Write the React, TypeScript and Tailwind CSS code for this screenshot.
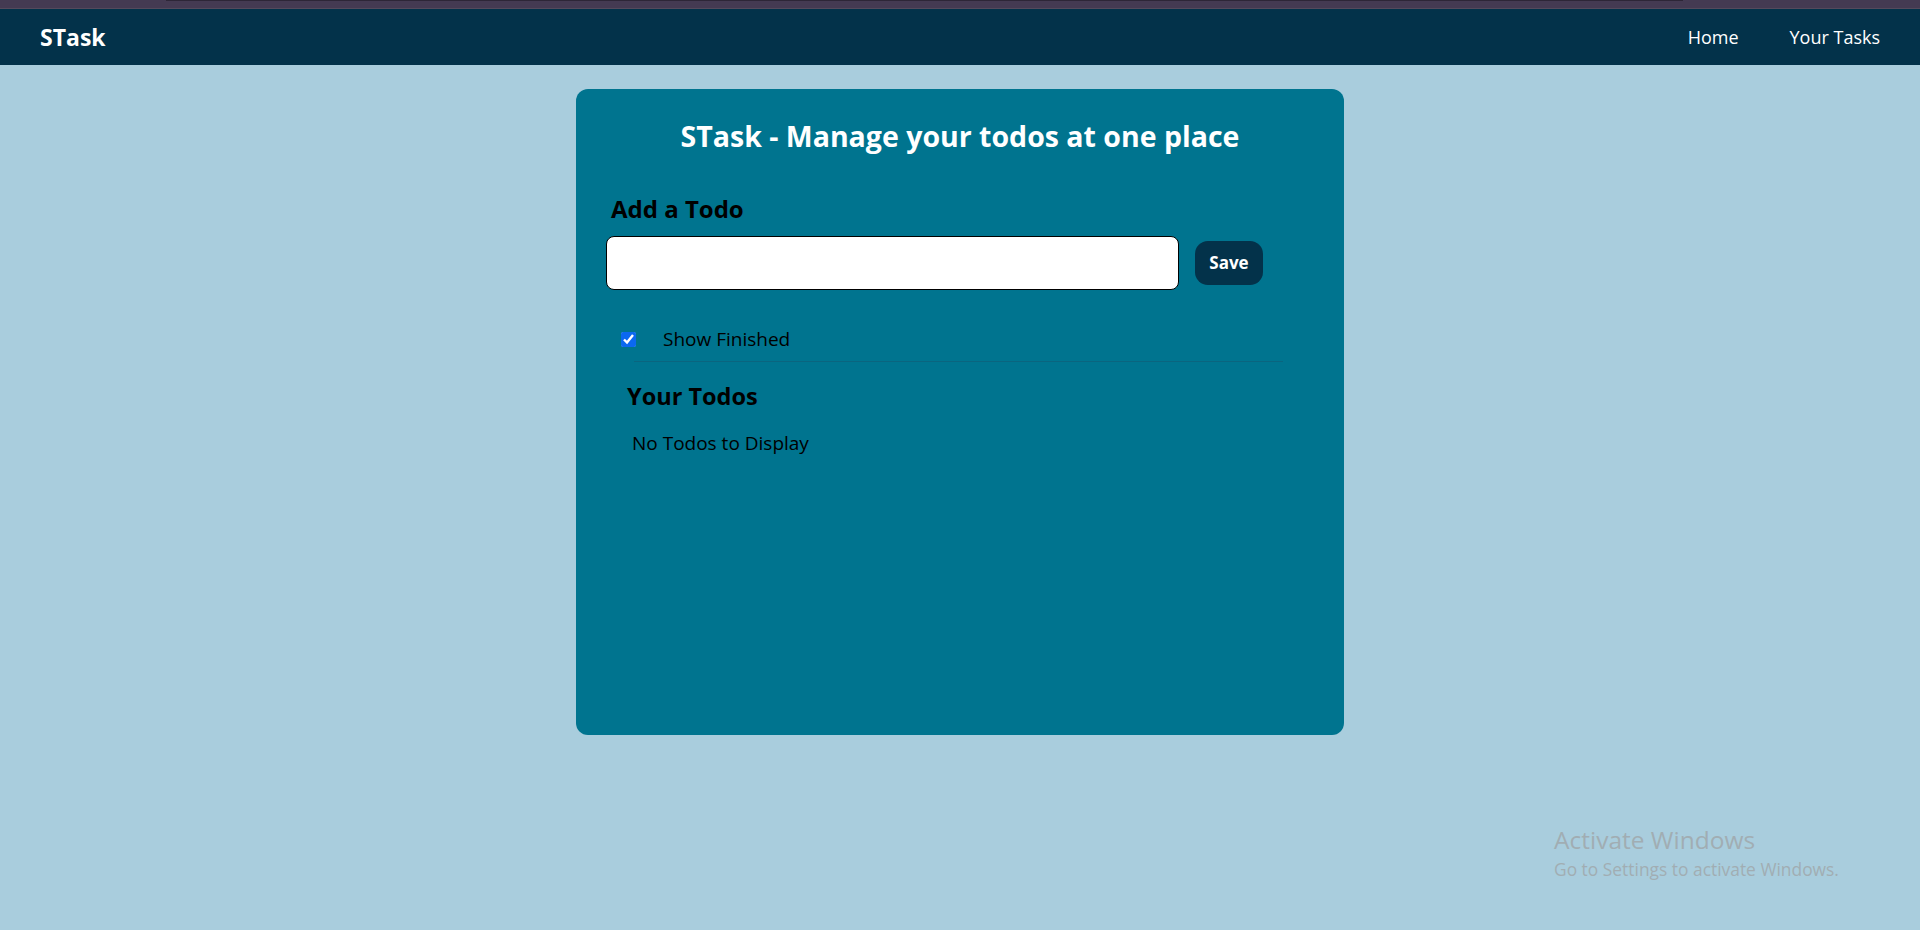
import React from "react";

export default function App() {
  return (
    <div className="relative min-h-screen bg-[#a9cddd] font-['Open_Sans',_'Noto_Sans',_sans-serif]">
      <div className="h-[9px] bg-[#443a52] flex flex-col">
        <div className="ml-[166px] w-[1517px] h-[1px] bg-[#2d2637]" />
        <div className="flex-1" />
        <div className="h-[1px] bg-[#544a5c]" />
      </div>
      <nav className="h-[56px] bg-[#03324a] text-white flex items-center justify-between pl-10 pr-10">
        <div className="text-[23px] font-bold leading-none">STask</div>
        <ul className="flex gap-[51px] text-[18px] leading-none">
          <li className="cursor-pointer">Home</li>
          <li className="cursor-pointer">Your Tasks</li>
        </ul>
      </nav>

      <div className="mx-auto mt-6 w-[768px] h-[646px] rounded-xl bg-[#00748f] px-[30px] pt-[29px]">
        <h1 className="text-center text-[28.5px] leading-[36px] font-bold text-white">
          STask - Manage your todos at one place
        </h1>
        <h2 className="mt-[39px] ml-[5px] text-[24px] leading-[32px] font-bold text-black">Add a Todo</h2>
        <div className="mt-[11px] flex items-center gap-4">
          <input
            type="text"
            className="w-[573px] h-[54px] rounded-lg border border-black bg-white px-3 outline-none"
          />
          <button className="w-[68px] h-[44px] rounded-[13px] bg-[#03324a] text-white font-bold text-[17px]">
            Save
          </button>
        </div>
        <div className="mt-[35px] ml-[15px] flex items-center h-[28px]">
          <input type="checkbox" defaultChecked className="w-[15px] h-[15px] accent-[#0b68f0]" />
          <label className="ml-[27px] text-[19px] leading-[28px] text-black">Show Finished</label>
        </div>
        <div className="mt-[8px] ml-[28px] w-[649px] h-[1px] bg-[#0a657f]" />
        <h2 className="mt-[18px] ml-[21px] text-[23.5px] leading-[32px] font-bold text-black">Your Todos</h2>
        <div className="mt-[17px] ml-[26px] text-[19px] leading-[28px] text-black">No Todos to Display</div>
      </div>

      <div className="absolute left-[1554px] top-[824px] text-[#a1adb3] pointer-events-none">
        <div className="text-[24.5px] leading-[32px]">Activate Windows</div>
        <div className="text-[17.4px] leading-[27px]">Go to Settings to activate Windows.</div>
      </div>
    </div>
  );
}
